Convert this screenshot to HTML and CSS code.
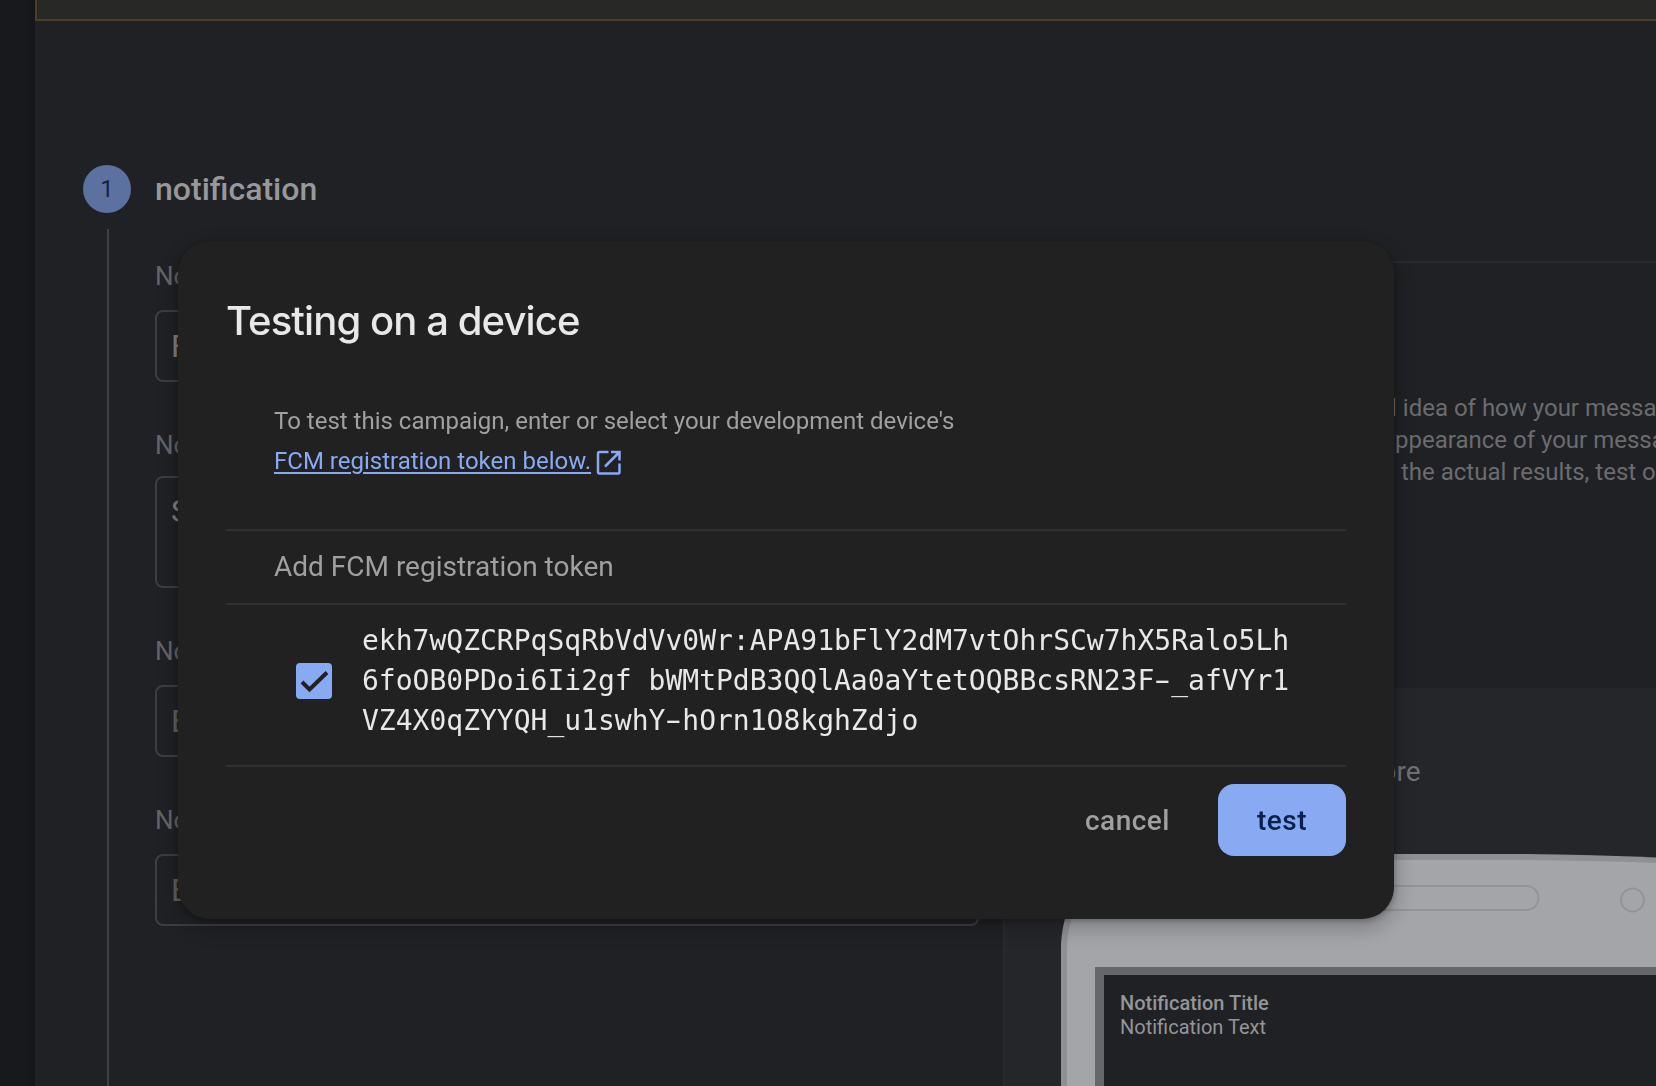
FILE: index.html
```html
<!DOCTYPE html>
<html lang="en">
<head>
<meta charset="utf-8">
<title>Testing on a device</title>
<link rel="stylesheet" href="styles.css">
</head>
<body>
<div class="app">
  <nav class="rail"></nav>
  <main class="main">
    <div class="banner"></div>
    <div class="columns">
      <section class="stepper">
        <header class="step-head">
          <span class="step-number">1</span>
          <h2 class="step-title">notification</h2>
        </header>
        <div class="step-body">
          <div class="step-line"></div>
          <form class="fields">
            <label class="label">No</label>
            <div class="input filled">F</div>
            <label class="label">No</label>
            <div class="input area filled">S</div>
            <label class="label">No</label>
            <div class="input">E</div>
            <label class="label">No</label>
            <div class="input">E</div>
          </form>
        </div>
      </section>
      <aside class="preview">
        <div class="about">
          <p class="about-line l1">l idea of how your messa</p>
          <p class="about-line l2">appearance of your messa</p>
          <p class="about-line l3">the actual results, test o</p>
        </div>
        <div class="stage">
          <div class="state">more</div>
          <div class="phone">
            <svg class="phone-body" width="595" height="232" viewBox="0 0 595 232">
              <path class="shell-edge" d="M0 232V91C2 45 28 0 100 0H455Q530 0.500 595 3.500V232Z"/>
              <path class="shell" d="M6 232V91C8 48 36 6 104 6H455Q530 6.500 595 9V232Z"/>
              <rect class="mark" x="250" y="32" width="227.500" height="24" rx="12"/>
              <circle class="mark" cx="571.500" cy="46" r="11.500"/>
            </svg>
            <div class="screen">
              <div class="note-title">Notification Title</div>
              <div class="note-text">Notification Text</div>
            </div>
          </div>
        </div>
      </aside>
    </div>
  </main>
</div>

<div class="overlay">
  <div class="dialog" role="dialog">
    <h1 class="dialog-title">Testing on a device</h1>
    <div class="intro">
      <div>To test this campaign, enter or select your development device's</div>
      <div class="intro-link"><a class="link">FCM registration token below.</a><svg class="launch" width="26" height="26" viewBox="0 0 26 26"><path d="M12.500 2H3.500Q2 2 2 3.500V22Q2 23.500 3.500 23.500H22Q23.500 23.500 23.500 22V13.500M15 2H23.500V10.500M23.500 2L9 16.500"/></svg></div>
    </div>
    <div class="add-row">Add FCM registration token</div>
    <div class="token-row">
      <span class="checkbox"><svg width="36" height="36" viewBox="0 0 36 36"><path d="M6 19L13.500 26.500L31 9.500"/></svg></span>
      <div class="token">ekh7wQZCRPqSqRbVdVv0Wr:APA91bFlY2dM7vtOhrSCw7hX5Ralo5Lh<br>6foOB0PDoi6Ii2gf bWMtPdB3QQlAa0aYtetOQBBcsRN23F<span class="dash">-</span>_afVYr1<br>VZ4X0qZYYQH_u1swhY<span class="dash">-</span>hOrn1O8kghZdjo</div>
    </div>
    <div class="actions">
      <button class="btn cancel">cancel</button>
      <button class="btn test">test</button>
    </div>
  </div>
</div>
</body>
</html>
```
FILE: styles.css
```css
* { box-sizing: border-box; }
html, body { height: 100%; }
body {
  margin: 0;
  overflow: hidden;
  background: #202124;
  font-family: Roboto, "Liberation Sans", sans-serif;
}
h1, h2, p { margin: 0; font-weight: 400; }

.app { display: flex; height: 1086px; }
.rail { width: 35px; flex: none; background: linear-gradient(90deg, #17191c 70%, #151619); }
.main { flex: 1; min-width: 0; display: flex; flex-direction: column; }
.banner {
  height: 21px;
  flex: none;
  background: #282826;
  border-left: 2px solid #4e3e28;
  border-bottom: 2px solid #4e3e28;
}
.columns { flex: 1; min-height: 0; display: grid; grid-template-columns: 968px 1fr; }

/* Stepper */
.stepper { display: flex; flex-direction: column; min-height: 0; padding: 144px 24px 0 48px; }
.step-head { display: flex; gap: 24px; height: 48px; }
.step-number {
  width: 48px;
  height: 48px;
  border-radius: 50%;
  background: #5b72a1;
  color: #16233f;
  font-size: 24px;
  line-height: 48px;
  text-align: center;
}
.step-title { font-size: 32px; line-height: 48px; font-weight: 500; color: #97989b; }
.step-body { flex: 1; min-height: 0; display: flex; padding: 16px 0 0 24px; }
.step-line { width: 2px; background: #3f4047; }
.fields { flex: 1; margin-left: 46px; padding-top: 31px; display: flex; flex-direction: column; }
.label { font-size: 26px; line-height: 32px; color: #646568; }
.input {
  height: 72px;
  margin: 18px 0 47px;
  padding-left: 14px;
  border: 2px solid #3b3e45;
  border-radius: 8px;
  font-size: 32px;
  line-height: 68px;
  color: #606165;
}
.input.area { height: 112px; margin-top: 15px; padding-top: 9px; line-height: 48px; }
.input.filled { color: #808185; }

/* Preview column */
.preview { display: flex; flex-direction: column; min-height: 0; overflow: hidden; padding-top: 240px; }
.about { height: 427px; flex: none; border-top: 2px solid #2a2b2e; padding-top: 129px; }
.about-line { font-size: 24px; line-height: 32px; color: #6b6c6f; white-space: nowrap; }
.l1 { padding-left: 388px; }
.l2 { padding-left: 379px; }
.l3 { padding-left: 398px; }
.stage { flex: 1; background: #25262a; border-left: 2px solid #292a2d; }
.state { padding: 64px 0 0 351px; font-size: 28px; line-height: 40px; color: #707174; }
.phone { display: grid; margin: 62px 0 0 56px; }
.phone-body, .screen { grid-area: 1 / 1; }
.phone-body { display: block; }
.shell-edge { fill: #8e9093; }
.shell { fill: #a4a5a9; }
.mark { fill: none; stroke: #939497; stroke-width: 2; }
.screen {
  margin: 113px 0 0 34px;
  padding: 16px 0 0 16px;
  border-top: 8px solid #66676b;
  border-left: 9px solid #66676b;
  background: #202124;
  font-size: 20px;
  line-height: 24px;
  color: #949598;
}
.note-title { font-weight: 500; }

/* Dialog */
.overlay { position: fixed; inset: 0; padding: 241px 0 0 178px; }
.dialog {
  width: 1216px;
  height: 678px;
  padding: 48px;
  border-radius: 32px;
  background: #212121;
  box-shadow: 0 8px 16px 6px rgba(0, 0, 0, .15), 0 2px 6px rgba(0, 0, 0, .3);
  color: #e8e8e8;
}
.dialog-title {
  font-family: Inter, sans-serif;
  font-size: 40px;
  line-height: 64px;
  font-weight: 500;
  letter-spacing: -.9px;
}
.intro {
  height: 176px;
  margin-top: 48px;
  padding-left: 48px;
  font-size: 24px;
  line-height: 40px;
  color: #a0a0a0;
}
.intro-link { display: flex; }
.link { color: #87aaf2; text-decoration: underline; text-decoration-thickness: 2px; text-underline-offset: 3px; }
.launch { margin: 9px 0 0 5px; fill: none; stroke: #87aaf2; stroke-width: 2.500; }
.add-row {
  height: 76px;
  margin-top: -48px;
  padding-left: 48px;
  border-top: 2px solid #303030;
  border-bottom: 2px solid #303030;
  font-size: 28px;
  line-height: 72px;
  color: #a0a0a0;
}
.token-row { display: flex; height: 162px; padding: 16px 0 0 70px; border-bottom: 2px solid #303030; }
.checkbox { width: 36px; height: 36px; margin-top: 42px; border-radius: 4px; background: #87aaf2; }
.checkbox svg { display: block; fill: none; stroke: #212121; stroke-width: 4; }
.token {
  margin-left: 30px;
  font-family: "DejaVu Sans Mono", monospace;
  font-size: 28px;
  line-height: 40px;
  white-space: nowrap;
}
.dash { display: inline-block; transform: scaleX(1.700); }
.actions { display: flex; justify-content: flex-end; padding-top: 17px; }
.btn {
  height: 72px;
  padding: 2px 0 0;
  border: 0;
  border-radius: 16px;
  background: none;
  font: 500 28px/70px Roboto, "Liberation Sans", sans-serif;
  color: #a0a0a0;
}
.cancel { margin-right: 48px; letter-spacing: .5px; }
.test { width: 128px; background: #87aaf2; color: #0c1f4d; letter-spacing: .5px; }
```
